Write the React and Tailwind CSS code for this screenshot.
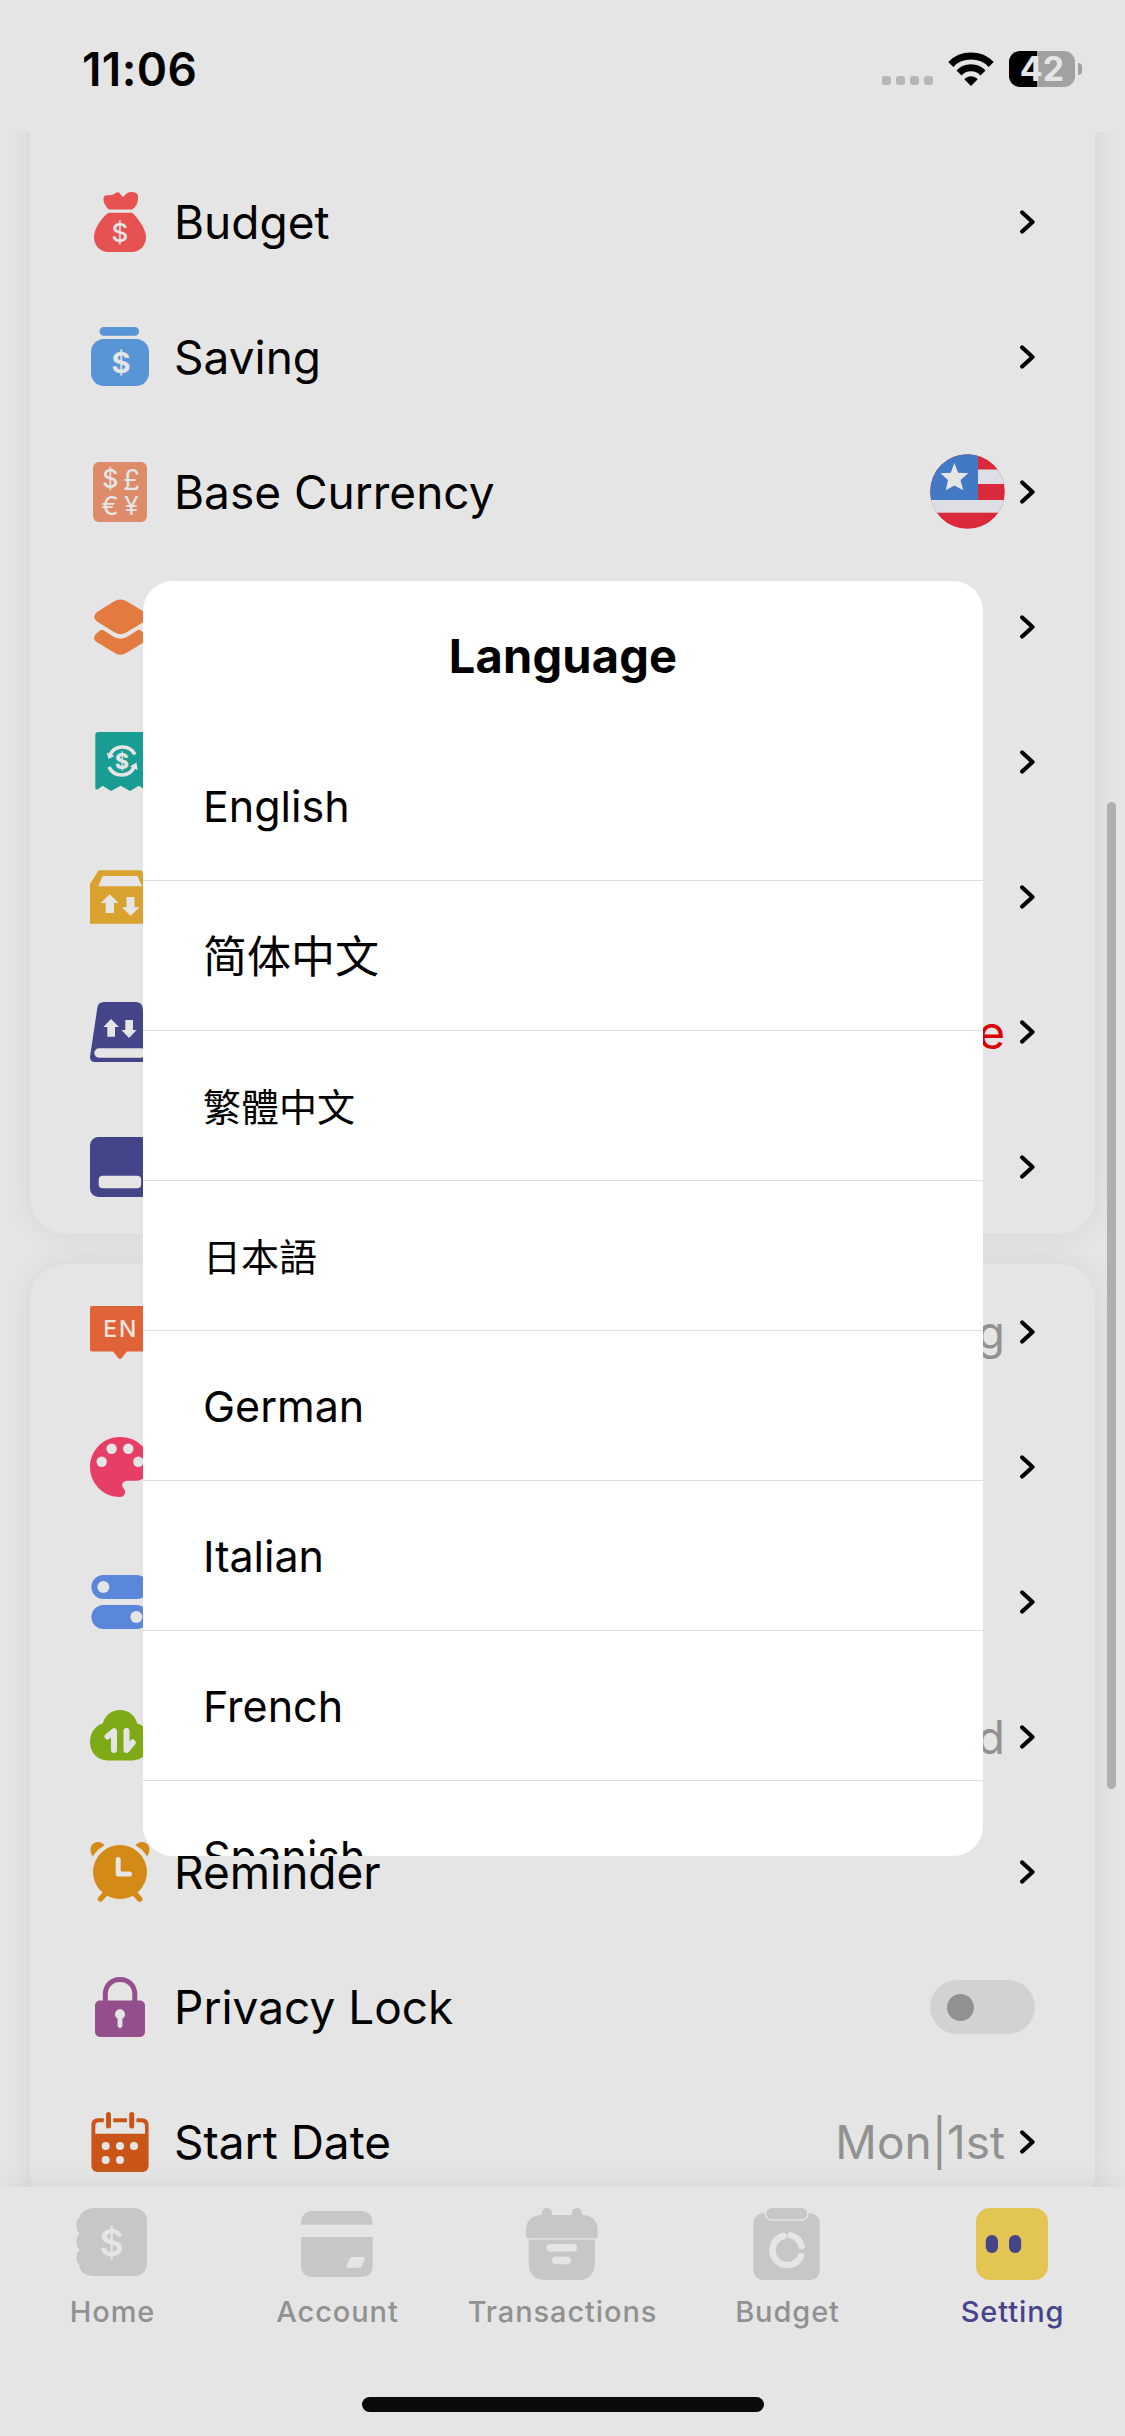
const BG = '#e5e5e5'

function Icon({ children, className = 'mt-px size-[60px]', size = 60 }) {
  return (
    <svg viewBox={`0 0 ${size} ${size}`} className={`shrink-0 overflow-visible ${className}`} fill="none">
      {children}
    </svg>
  )
}

function Glyph({ x, y, size, weight = 600, children }) {
  return (
    <text x={x} y={y} fontSize={size} fontWeight={weight} textAnchor="middle" fill={BG}>
      {children}
    </text>
  )
}

function BudgetIcon() {
  return (
    <Icon>
      <path fill="#e55251" d="M19 17.6C15 14 13 9.500 13.600 6C14 3 17 3.200 21 3C24.500 2.500 26 0 28 .2C30.500.5 31.300 4.500 33 4.800C34.500 4.500 36 0 41 0C46.500 0 48.500 2 48 6.500C48 11 46 15 42 17.600Z" />
      <path fill="#e55251" d="M19 20.700H42C44 22 56 35 56 45C56 54.500 49 60 42 60H18C11 60 4 54.500 4 45C4 35 15 22 19 20.700Z" />
      <Glyph x="30" y="50" size="26" weight="500">$</Glyph>
    </Icon>
  )
}

function SavingIcon() {
  return (
    <Icon>
      <g fill="#5795d6">
        <rect x="9.600" width="39.500" height="8.700" rx="4.300" />
        <rect x="1" y="12" width="58" height="47" rx="13" />
      </g>
      <Glyph x="31" y="45.500" size="29" weight="700">$</Glyph>
    </Icon>
  )
}

function CurrencyIcon() {
  return (
    <Icon>
      <rect x="3" width="54" height="60" rx="6" fill="#de8b6a" />
      <Glyph x="20.300" y="26" size="25" weight="500">$</Glyph>
      <Glyph x="41.500" y="27.500" size="28" weight="400">£</Glyph>
      <Glyph x="20" y="53" size="26" weight="400">€</Glyph>
      <Glyph x="41.500" y="53" size="26" weight="400">¥</Glyph>
    </Icon>
  )
}

function CategoryIcon() {
  return (
    <Icon>
      <g fill="#e37a40">
        <path d="M23.500 4.800Q30.500 0 37.500 4.800L54.500 15Q60 19.700 54.500 24.500L37.500 34.800Q30.500 39.600 23.500 34.800L7 24.500Q1.500 19.700 7 15Z" />
        <path d="M5.800 37L10.500 33.200Q12 32.300 13.500 33.200L22.500 39Q30.500 44.600 38.500 39L47.500 33.200Q49 32.300 50.500 33.200L55.200 37Q59.500 41 55.200 44.500L37 55.500Q30.500 60 24 55.500L5.800 44.500Q2.500 41 5.800 37Z" />
      </g>
    </Icon>
  )
}

function RecurringIcon() {
  return (
    <Icon>
      <path fill="#189c93" d="M8.500 0H52Q55 0 55 3V58L49 53.700L40 59L30.700 53.700L21 59L12.700 53.700L7.500 57.500Q5.300 58 5.300 56V3Q5.300 0 8.500 0Z" />
      <g stroke={BG} strokeWidth="3.600">
        <path d="M19.500 24A14 14 0 0 1 45 22.500" />
        <path d="M44.500 34.500A14 14 0 0 1 19 35" />
      </g>
      <path fill={BG} d="M16.700 20.500L18.500 27L24.500 24ZM47.700 38L46.500 30.500L40 34.500Z" />
      <Glyph x="32" y="36.500" size="21" weight="800">$</Glyph>
    </Icon>
  )
}

function ExportIcon() {
  return (
    <Icon>
      <path fill="#d9a22e" d="M8.700 3.300H51.300L60 17V56.700H0V17Z" />
      <g fill={BG}>
        <path d="M12.700 9H47.300L52 19.300H8.300Z" />
        <path d="M19.700 27.300L28.700 36H24V46H15.700V36H10.700Z" />
        <path d="M40.700 49L32 40.300H36.500V30H44.500V40.300H49.300Z" />
      </g>
    </Icon>
  )
}

function BackupIcon() {
  return (
    <Icon>
      <path fill="#444489" d="M14 0H46Q52 0 52.700 6L60 55Q60 60 55 60H5Q0 60 0 55L7.300 6Q8 0 14 0Z" />
      <g fill={BG}>
        <rect x="4.300" y="46.300" width="51.400" height="9.400" rx="4.700" />
        <path d="M21 17L29 25H25V34.700H17.300V25H13.300Z" />
        <path d="M39 36L31.500 28H35.300V18H43V28H46.700Z" />
      </g>
    </Icon>
  )
}

function LedgerIcon() {
  return (
    <Icon>
      <rect width="60" height="60" rx="8.500" fill="#444489" />
      <rect x="8.700" y="38.700" width="42.400" height="12.600" rx="4" fill={BG} />
    </Icon>
  )
}

function LanguageIcon() {
  return (
    <Icon>
      <path fill="#df6337" d="M2 4H58Q60 4 60 6V47.500Q60 49.500 58 49.500H37L31.500 56.300Q30 57.700 28.500 56.300L23 49.500H2Q0 49.500 0 47.500V6Q0 4 2 4Z" />
      <text x="13.200" y="35" fontSize="23" fontWeight="500" letterSpacing="2" fill="#f2e4de">EN</text>
    </Icon>
  )
}

function ThemeIcon() {
  return (
    <Icon>
      <path fill="#e73e66" d="M30 60C13.400 60 0 46.600 0 30S13.400 0 30 0S60 12 60 27C60 37 54 43.700 46 43.700H37C33 43.700 31 48 33 50.500C37 54 35 60 30 60Z" />
      <g fill={BG}>
        <circle cx="11.700" cy="24.700" r="5.200" />
        <circle cx="21.600" cy="11.800" r="5.200" />
        <circle cx="38.300" cy="11.800" r="5.200" />
        <circle cx="48.300" cy="24.700" r="5.200" />
      </g>
    </Icon>
  )
}

function PreferenceIcon() {
  return (
    <Icon>
      <g fill="#5a87d9">
        <rect x="1.400" y="3" width="57.200" height="24" rx="12" />
        <rect x="1.400" y="33" width="57.200" height="24" rx="12" />
      </g>
      <circle cx="13.400" cy="15" r="6" fill={BG} />
      <circle cx="46.300" cy="45" r="6" fill={BG} />
    </Icon>
  )
}

function CloudIcon() {
  return (
    <Icon>
      <path fill="#7faa17" d="M18 53.500C7 53.500 0 45 0 35.500C0 26 5 18.500 12.700 16.500C15 8 22 3 30 3S45 8 47.300 16.500C55 18.500 60 26 60 35.500C60 45 53 53.500 42 53.500Z" />
      <g stroke={BG} strokeWidth="6" strokeLinecap="round" strokeLinejoin="round">
        <path d="M17.500 29.500L24 24.300V43" />
        <path d="M36.500 24V43L42.700 35.500" />
      </g>
      <path fill={BG} d="M17.500 29.500L24 24.300V31ZM36.500 43L42.700 35.500H36.500Z" />
    </Icon>
  )
}

function ReminderIcon() {
  return (
    <Icon>
      <g fill="#d48a16">
        <path d="M3 14.500C-1.500 9 0 0 8 0C11 0 13 1.500 14.500 3.500C9 6 5.500 10 3 14.500Z" />
        <path d="M57 14.500C61.500 9 60 0 52 0C49 0 47 1.500 45.500 3.500C51 6 54.500 10 57 14.500Z" />
        <circle cx="30" cy="30" r="27" />
      </g>
      <path stroke="#d48a16" strokeWidth="5.500" strokeLinecap="round" d="M15 52L10.500 57M45 52L49.700 57" />
      <path stroke={BG} strokeWidth="5" strokeLinecap="round" strokeLinejoin="round" d="M28.200 17.500V32H39.500" />
    </Icon>
  )
}

function LockIcon() {
  return (
    <Icon>
      <path stroke="#944f8c" strokeWidth="5" d="M15.300 25V17.500C15.300 8.500 21.500 2.500 30 2.500S44.800 8.500 44.800 17.500V25" />
      <rect x="5" y="23.500" width="50" height="36.500" rx="5" fill="#944f8c" />
      <circle cx="30" cy="37.300" r="5" fill={BG} />
      <path stroke={BG} strokeWidth="4.800" strokeLinecap="round" d="M30 38V48.500" />
    </Icon>
  )
}

function CalendarIcon() {
  return (
    <Icon>
      <rect x="1.400" y="6.300" width="57.200" height="53.700" rx="6" fill="#c95618" />
      <path fill={BG} d="M5.300 21.700V14Q5.300 10.300 9 10.300H51Q55 10.300 55 14V21.700Z" />
      <g stroke={BG} strokeWidth="9.500" strokeLinecap="round">
        <path d="M18.500 5V14M41.700 5V14" />
      </g>
      <g stroke="#c95618" strokeWidth="5" strokeLinecap="round">
        <path d="M18.500 2.500V14M41.700 2.500V14" />
      </g>
      <g fill={BG}>
        <circle cx="15.700" cy="34" r="4" />
        <circle cx="30" cy="34" r="4" />
        <circle cx="44" cy="34" r="4" />
        <circle cx="15.700" cy="48" r="4" />
        <circle cx="30" cy="48" r="4" />
      </g>
    </Icon>
  )
}

function Flag() {
  return (
    <svg viewBox="0 0 75 75" className="size-[75px]">
      <clipPath id="flag">
        <circle cx="37.500" cy="37.500" r="37.300" />
      </clipPath>
      <g clipPath="url(#flag)">
        <rect width="75" height="75" fill="#da293b" />
        <rect x="48" y="15.500" width="27" height="14.500" fill="#dddfe4" />
        <rect y="46" width="75" height="12.700" fill="#dddfe4" />
        <rect width="48" height="46" fill="#4378c5" />
        <path fill={BG} d="M24.300 9L28.200 18.800L38.300 19.300L30.500 26L33.200 36.300L24.300 31.500L15.800 36.300L18 26L10.500 19.300L20.800 18.800Z" />
      </g>
    </svg>
  )
}

function Toggle() {
  return (
    <div className="mt-px flex h-[54px] w-[105px] items-center rounded-full bg-[#d2d2d2] pl-[17px]">
      <div className="size-[27px] rounded-full bg-[#919191]" />
    </div>
  )
}

function Chevron() {
  return (
    <svg viewBox="0 0 15 24" className="h-6 w-[15px] shrink-0" fill="none">
      <path stroke="#000" strokeWidth="4.200" strokeLinecap="round" strokeLinejoin="round" d="M2.200 2.500L12.500 12L2.200 21.500" />
    </svg>
  )
}

function Row({ icon, label, value, valueClass = 'text-[#919191]', end }) {
  return (
    <div className="flex h-[135px] items-center px-[60px]">
      {icon}
      <span className="ml-6 text-[46px] leading-none">{label}</span>
      <div className="ml-auto flex items-center gap-[15px]">
        {value && <span className={`text-[46px] leading-none ${valueClass}`}>{value}</span>}
        {end}
        {end?.type !== Toggle && <Chevron />}
      </div>
    </div>
  )
}

const card = 'mx-[30px] bg-[#e5e5e5] shadow-[0_0_30px_rgba(0,0,0,0.07)]'

const languages = [
  { name: 'English' },
  { name: '简体中文', className: 'text-[44px]' },
  { name: '繁體中文', className: 'text-[38px]' },
  { name: '日本語', className: 'text-[38px]' },
  { name: 'German' },
  { name: 'Italian' },
  { name: 'French' },
  { name: 'Spanish' },
]

function LanguageDialog() {
  return (
    <div className="absolute top-[581px] left-[143px] h-[1275px] w-[840px] overflow-hidden rounded-[30px] bg-white">
      <h2 className="flex h-[150px] items-center justify-center text-[47px] font-bold tracking-[0.2px]">Language</h2>
      {languages.map(({ name, className = 'text-[43px]' }) => (
        <div key={name} className={`flex h-[150px] items-center border-b border-[#dedede] pt-[2px] pl-[60px] leading-none ${className}`}>
          {name}
        </div>
      ))}
    </div>
  )
}

function StatusBar() {
  return (
    <div className="flex h-[132px] shrink-0 items-center pt-[6px] pr-[43px] pb-0 pl-[82px]">
      <span className="text-[46px] leading-none font-semibold tracking-[0.4px]">11:06</span>
      <div className="mt-[23px] ml-auto flex gap-[5px]">
        {[0, 1, 2, 3].map((i) => (
          <span key={i} className="size-[9px] rounded-[3px] bg-[#b6b6b6]" />
        ))}
      </div>
      <svg viewBox="0 0 46 34" className="ml-[15px] h-[34px] w-[46px]" fill="none">
        <path stroke="#000" strokeWidth="7" d="M2.800 12.500C13.500 1.300 32.500 1.300 43.200 12.500" />
        <path stroke="#000" strokeWidth="7" d="M11 21C17.500 14 28.500 14 35 21" />
        <path fill="#000" d="M16.300 27.200C20 23.200 26 23.200 29.700 27.200L23 34Z" />
      </svg>
      <div className="ml-[15px] flex h-9 w-[66px] items-center justify-center rounded-[11px] bg-linear-to-r from-black from-[43%] to-[#a1a1a1] to-[43%] text-[34px] leading-none font-bold text-[#e5e5e5]">
        42
      </div>
      <div className="ml-[3px] h-3 w-1 rounded-r-full bg-[#a1a1a1]" />
    </div>
  )
}

function HomeTabIcon() {
  return (
    <Icon size={72} className="mr-px size-[72px]">
      <path fill="#c7c7c7" d="M18 0H57Q71 0 71 14V54Q71 68 57 68H18Q4 68 3 56Q.4 55 .4 49Q.4 44 3 43.500V41Q.4 39 .4 34Q.4 28 3 27V24.500Q.4 23 .4 17Q.4 11 3 10.500Q6 0 18 0Z" />
      <Glyph x="35.500" y="47.500" size="37" weight="600">$</Glyph>
    </Icon>
  )
}

function AccountTabIcon() {
  return (
    <Icon size={72} className="mr-px size-[72px]">
      <path fill="#c7c7c7" d="M12 3H60Q71.700 3 71.700 16.700H0Q0 3 12 3Z" />
      <path fill="#c7c7c7" d="M0 29H71.700V57Q71.700 69 60 69H12Q0 69 0 57Z" />
      <path fill={BG} d="M51 49H62Q64.500 49 63.500 51.500L61 57.500Q60 59.700 58 59.700H47Q44.800 59.700 45.700 57.500L48.500 51Q49.300 49 51 49Z" />
    </Icon>
  )
}

function TransactionsTabIcon() {
  return (
    <Icon size={72} className="mr-px size-[72px]">
      <g fill="#c7c7c7">
        <rect x="15.700" width="10.300" height="14" rx="5" />
        <rect x="45.800" width="10.300" height="14" rx="5" />
        <path d="M14 7H58Q71.700 9 71.700 22V28Q71.700 30.300 69 30.300H3Q0 30.300 0 28V22Q0 9 14 7Z" />
        <path d="M2.700 31.500H69V54Q69 72 52 72H20Q2.700 72 2.700 54Z" />
      </g>
      <rect x="20.500" y="36" width="30.500" height="7.500" rx="3.700" fill={BG} />
      <rect x="26" y="48.700" width="19" height="7.600" rx="3.700" fill={BG} />
    </Icon>
  )
}

function BudgetTabIcon() {
  return (
    <Icon size={72} className="mr-px size-[72px]">
      <rect x="2.500" y="5.300" width="66.300" height="66.700" rx="9.500" fill="#c7c7c7" />
      <rect x="14.600" y="-.7" width="42.200" height="12.700" rx="6" fill="#c7c7c7" stroke={BG} strokeWidth="1.500" />
      <g stroke={BG} strokeWidth="6.500" strokeLinecap="round">
        <path d="M39.500 27.300A14.800 14.800 0 0 1 50.500 38" />
        <path d="M50 48A14.800 14.800 0 1 1 32.500 28" />
      </g>
    </Icon>
  )
}

function SettingTabIcon() {
  return (
    <Icon size={72} className="mr-px size-[72px]">
      <rect width="72" height="72" rx="14" fill="#e2c552" />
      <rect x="9.800" y="27" width="12.200" height="18" rx="6" fill="#454389" />
      <rect x="33" y="27" width="12.200" height="18" rx="6" fill="#454389" />
    </Icon>
  )
}

const tabs = [
  { name: 'Home', icon: <HomeTabIcon /> },
  { name: 'Account', icon: <AccountTabIcon /> },
  { name: 'Transactions', icon: <TransactionsTabIcon /> },
  { name: 'Budget', icon: <BudgetTabIcon /> },
  { name: 'Setting', icon: <SettingTabIcon />, active: true },
]

function TabBar() {
  return (
    <nav className="relative flex h-[249px] shrink-0 flex-col items-center bg-[#e5e5e5] pt-[21px] shadow-[0_0_30px_rgba(0,0,0,0.07)]">
      <div className="grid w-full grid-cols-5">
        {tabs.map(({ name, icon, active }) => (
          <div key={name} className="flex flex-col items-center">
            {icon}
            <span className={`mt-[14px] text-[29px] leading-[36px] font-medium tracking-[0.9px] ${active ? 'text-[#454389]' : 'text-[#919191]'}`}>
              {name}
            </span>
          </div>
        ))}
      </div>
      <div className="mt-[67px] h-[15px] w-[402px] rounded-full bg-[#0a0a0a]" />
    </nav>
  )
}

export default function App() {
  return (
    <div className="relative flex h-[2436px] w-[1125px] flex-col overflow-hidden bg-[#e5e5e5] font-[Inter,'Noto_Sans_CJK_SC',sans-serif] text-black">
      <StatusBar />
      <main className="min-h-0 flex-1 overflow-hidden">
        <section className={`${card} -mt-6 rounded-b-[36px] pt-[46px]`}>
          <Row icon={<BudgetIcon />} label="Budget" />
          <Row icon={<SavingIcon />} label="Saving" />
          <Row icon={<CurrencyIcon />} label="Base Currency" end={<Flag />} />
          <Row icon={<CategoryIcon />} />
          <Row icon={<RecurringIcon />} />
          <Row icon={<ExportIcon />} />
          <Row icon={<BackupIcon />} value="e" valueClass="text-[#dd0000]" />
          <Row icon={<LedgerIcon />} />
        </section>
        <section className={`${card} mt-[30px] rounded-[36px]`}>
          <Row icon={<LanguageIcon />} value="g" />
          <Row icon={<ThemeIcon />} />
          <Row icon={<PreferenceIcon />} />
          <Row icon={<CloudIcon />} value="d" />
          <Row icon={<ReminderIcon />} label="Reminder" />
          <Row icon={<LockIcon />} label="Privacy Lock" end={<Toggle />} />
          <Row icon={<CalendarIcon />} label="Start Date" value="Mon|1st" />
        </section>
      </main>
      <TabBar />
      <div className="absolute top-[802px] right-[9px] h-[987px] w-[9px] rounded-full bg-[#afafaf]" />
      <LanguageDialog />
    </div>
  )
}
